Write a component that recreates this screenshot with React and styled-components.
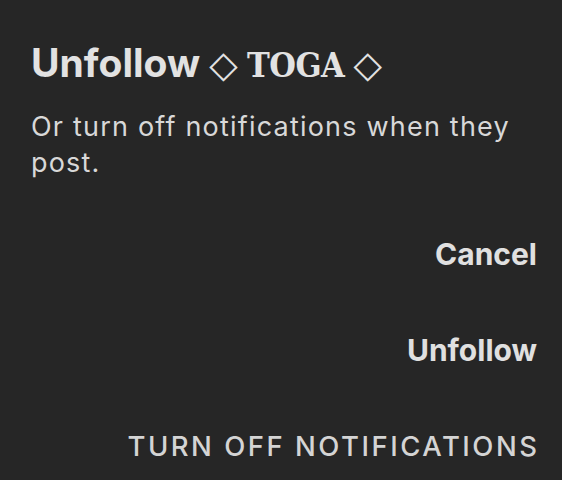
import React from 'react'
import styled, { createGlobalStyle } from 'styled-components'

const GlobalStyle = createGlobalStyle`
  html, body {
    margin: 0;
    padding: 0;
    background: #262626;
  }
  body {
    font-family: Inter, "Noto Sans", sans-serif;
    -webkit-font-smoothing: antialiased;
  }
`

const Dialog = styled.div`
  width: 562px;
  height: 480px;
  box-sizing: border-box;
  padding: 40px 25px 0 31px;
  background: #262626;
  display: flex;
  flex-direction: column;
  overflow: hidden;
`

const Title = styled.h1`
  margin: 0;
  font-size: 39px;
  line-height: 1.2;
  font-weight: 700;
  color: #e2e2e2;
  white-space: nowrap;
`

const Diamond = styled.span`
  font-family: "DejaVu Sans", sans-serif;
  font-weight: 400;
  font-size: 37px;
`

const Handle = styled.span`
  font-family: "DejaVu Serif Condensed", "DejaVu Serif", serif;
  font-stretch: condensed;
  font-weight: 700;
  font-size: 34px;
  letter-spacing: -0.5px;
`

const Message = styled.p`
  margin: 22px 0 0;
  font-size: 27px;
  line-height: 36px;
  letter-spacing: 1.2px;
  font-weight: 400;
  color: #d8d8d8;
`

const Actions = styled.div`
  margin-top: 56px;
  display: flex;
  flex-direction: column;
  align-items: flex-end;
  gap: 61px;
`

const ActionButton = styled.button`
  margin: 0;
  padding: 0;
  border: none;
  background: none;
  font-family: Inter, "Noto Sans", sans-serif;
  line-height: 35px;
  color: ${(p) => (p.$caps ? '#d4d4d4' : '#e0e0e0')};
  font-size: ${(p) => (p.$caps ? '27.5px' : '30px')};
  font-weight: ${(p) => (p.$caps ? 500 : 700)};
  letter-spacing: ${(p) => (p.$caps ? '2.5px' : '0')};
  text-transform: ${(p) => (p.$caps ? 'uppercase' : 'none')};
  margin-right: ${(p) => (p.$caps ? '-2.5px' : '0')};
  cursor: pointer;
`

export default function App() {
  return (
    <>
      <GlobalStyle />
      <Dialog>
        <Title>
          Unfollow <Diamond>◇</Diamond> <Handle>TOGA</Handle> <Diamond>◇</Diamond>
        </Title>
        <Message>Or turn off notifications when they post.</Message>
        <Actions>
          <ActionButton>Cancel</ActionButton>
          <ActionButton>Unfollow</ActionButton>
          <ActionButton $caps>Turn off notifications</ActionButton>
        </Actions>
      </Dialog>
    </>
  )
}
